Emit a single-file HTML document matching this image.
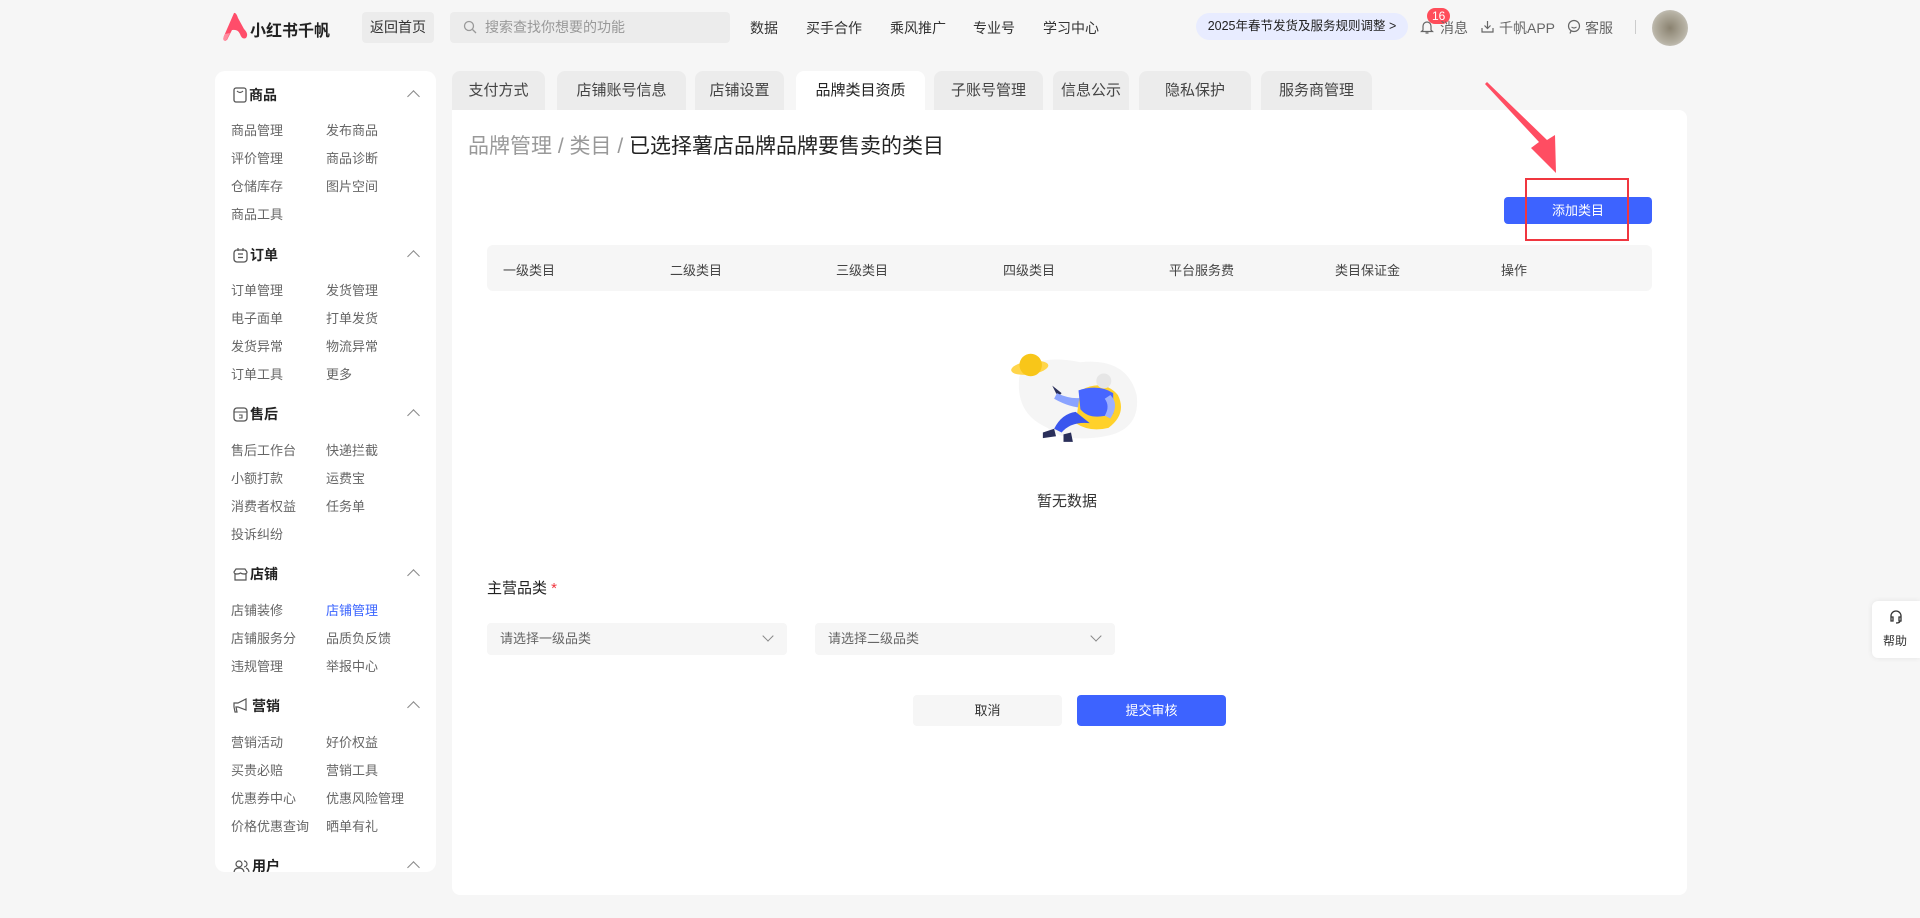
<!DOCTYPE html>
<html><head><meta charset="utf-8"><style>
*{margin:0;padding:0;box-sizing:border-box}
body{width:1920px;height:918px;background:#f6f6f6;font-family:"Liberation Sans","Noto Sans CJK SC",sans-serif;position:relative;overflow:hidden;color:#333}
.a{position:absolute;white-space:nowrap}
.nav{font-size:14px;color:#333;top:18px}
.side{left:215px;top:71px;width:221px;height:801px;background:#fff;border-radius:10px;overflow:hidden}
.sh{position:absolute;left:18px;font-size:14px;color:#222;font-weight:bold}
.sh svg{vertical-align:-3px;margin-right:2px}
.chev{position:absolute;left:194px;width:9px;height:9px;border-left:1.3px solid #888;border-top:1.3px solid #888;transform:rotate(45deg)}
.it{position:absolute;font-size:13px;color:#666}
.tab{top:71px;height:39px;background:#ececec;border-radius:8px 8px 0 0;font-size:15px;color:#444;text-align:center;line-height:40px}
.th{font-size:13px;color:#444;top:260px}
</style></head><body>
<!-- header -->
<svg class="a" style="left:220px;top:12px" width="32" height="30" viewBox="0 0 32 30"><path d="M14 1 L4 24 Q2 29 7 28 L12 18 Q18 17 20 22 Q22 28 26 26 Q29 22 24 17 L18 6 Q16 0 14 1Z" fill="#ff4d6a"/><path d="M5 22 Q1 29 6 29 L10 21Z" fill="#ff8da0"/></svg>
<div class="a" style="left:250px;top:17px;font-size:16px;font-weight:bold;color:#222">小红书千帆</div>
<div class="a" style="left:362px;top:12px;width:72px;height:31px;background:#ececec;border-radius:4px;font-size:14px;line-height:31px;text-align:center">返回首页</div>
<div class="a" style="left:450px;top:12px;width:280px;height:31px;background:#ececec;border-radius:4px;font-size:14px;line-height:31px;color:#999;padding-left:35px">搜索查找你想要的功能</div>
<svg class="a" style="left:463px;top:20px" width="14" height="14" viewBox="0 0 14 14"><circle cx="6" cy="6" r="4.5" fill="none" stroke="#999" stroke-width="1.3"/><path d="M9.5 9.5L13 13" stroke="#999" stroke-width="1.3"/></svg>
<div class="a nav" style="left:750px">数据</div>
<div class="a nav" style="left:806px">买手合作</div>
<div class="a nav" style="left:890px">乘风推广</div>
<div class="a nav" style="left:973px">专业号</div>
<div class="a nav" style="left:1043px">学习中心</div>
<div class="a" style="left:1196px;top:13px;width:212px;height:27px;background:#e8ecff;border-radius:14px;font-size:12.5px;line-height:27px;text-align:center;color:#222">2025年春节发货及服务规则调整 &gt;</div>
<svg class="a" style="left:1420px;top:19px" width="14" height="16" viewBox="0 0 14 16"><path d="M3 11V7a4 4 0 018 0v4l1.5 1.5h-11z M5.5 14h3" fill="none" stroke="#666" stroke-width="1.2"/></svg>
<div class="a" style="left:1427px;top:8px;height:16px;padding:0 5px;background:#ff4d5a;border-radius:8px;color:#fff;font-size:12px;line-height:16px">16</div>
<div class="a nav" style="left:1440px;color:#666">消息</div>
<svg class="a" style="left:1481px;top:20px" width="13" height="13" viewBox="0 0 13 13"><path d="M6.5 1v7M3.5 5.5l3 3 3-3M1 8v4h11V8" fill="none" stroke="#666" stroke-width="1.2"/></svg>
<div class="a nav" style="left:1499px;color:#666">千帆APP</div>
<svg class="a" style="left:1567px;top:19px" width="14" height="15" viewBox="0 0 14 15"><circle cx="7" cy="7" r="5.5" fill="none" stroke="#666" stroke-width="1.2"/><path d="M4.5 8q2.5 2 5 0" fill="none" stroke="#666" stroke-width="1.1"/><path d="M4 12l-1 2.5" stroke="#666" stroke-width="1.2"/></svg>
<div class="a nav" style="left:1585px;color:#666">客服</div>
<div class="a" style="left:1635px;top:20px;width:1px;height:14px;background:#ccc"></div>
<div class="a" style="left:1652px;top:10px;width:36px;height:36px;border-radius:50%;background:radial-gradient(#8a8270,#b5b0a2 60%,#ddd)"></div>

<!-- sidebar -->
<div class="a side">
<div class="sh" style="top:14px"><svg width="14" height="16" viewBox="0 0 14 16"><rect x="1" y="1" width="12" height="14" rx="2" fill="none" stroke="#555" stroke-width="1.3"/><path d="M4 4q3 3 6 0" fill="none" stroke="#555" stroke-width="1.2"/></svg>商品</div><div class="chev" style="top:21px"></div>
<div class="it" style="left:16px;top:49px">商品管理</div><div class="it" style="left:111px;top:49px">发布商品</div>
<div class="it" style="left:16px;top:77px">评价管理</div><div class="it" style="left:111px;top:77px">商品诊断</div>
<div class="it" style="left:16px;top:105px">仓储库存</div><div class="it" style="left:111px;top:105px">图片空间</div>
<div class="it" style="left:16px;top:133px">商品工具</div>
<div class="sh" style="top:174px"><svg width="15" height="15" viewBox="0 0 15 15"><rect x="1" y="2" width="13" height="12" rx="3" fill="none" stroke="#555" stroke-width="1.3"/><path d="M5 6h5M5 9.5h5M5 0v3M10 0v3" stroke="#555" stroke-width="1.2"/></svg>订单</div><div class="chev" style="top:181px"></div>
<div class="it" style="left:16px;top:209px">订单管理</div><div class="it" style="left:111px;top:209px">发货管理</div>
<div class="it" style="left:16px;top:237px">电子面单</div><div class="it" style="left:111px;top:237px">打单发货</div>
<div class="it" style="left:16px;top:265px">发货异常</div><div class="it" style="left:111px;top:265px">物流异常</div>
<div class="it" style="left:16px;top:293px">订单工具</div><div class="it" style="left:111px;top:293px">更多</div>
<div class="sh" style="top:333px"><svg width="15" height="15" viewBox="0 0 15 15"><rect x="1" y="1" width="13" height="13" rx="3" fill="none" stroke="#555" stroke-width="1.3"/><path d="M1 5h13M6 8h3v3H6" fill="none" stroke="#555" stroke-width="1.1"/></svg>售后</div><div class="chev" style="top:340px"></div>
<div class="it" style="left:16px;top:369px">售后工作台</div><div class="it" style="left:111px;top:369px">快递拦截</div>
<div class="it" style="left:16px;top:397px">小额打款</div><div class="it" style="left:111px;top:397px">运费宝</div>
<div class="it" style="left:16px;top:425px">消费者权益</div><div class="it" style="left:111px;top:425px">任务单</div>
<div class="it" style="left:16px;top:453px">投诉纠纷</div>
<div class="sh" style="top:493px"><svg width="15" height="15" viewBox="0 0 15 15"><path d="M1 5l2-3h9l2 3q0 2-3 2-2 0-3.5-1Q6 7 4 7 1 7 1 5zM2 7v6h11V7" fill="none" stroke="#555" stroke-width="1.2"/></svg>店铺</div><div class="chev" style="top:500px"></div>
<div class="it" style="left:16px;top:529px">店铺装修</div><div class="it" style="left:111px;top:529px;color:#3a64ff">店铺管理</div>
<div class="it" style="left:16px;top:557px">店铺服务分</div><div class="it" style="left:111px;top:557px">品质负反馈</div>
<div class="it" style="left:16px;top:585px">违规管理</div><div class="it" style="left:111px;top:585px">举报中心</div>
<div class="sh" style="top:625px"><svg width="17" height="16" viewBox="0 0 17 16"><path d="M1 5h4l8-4v11l-8-3H3l1 5H2L1 9z" fill="none" stroke="#555" stroke-width="1.2"/></svg>营销</div><div class="chev" style="top:632px"></div>
<div class="it" style="left:16px;top:661px">营销活动</div><div class="it" style="left:111px;top:661px">好价权益</div>
<div class="it" style="left:16px;top:689px">买贵必赔</div><div class="it" style="left:111px;top:689px">营销工具</div>
<div class="it" style="left:16px;top:717px">优惠券中心</div><div class="it" style="left:111px;top:717px">优惠风险管理</div>
<div class="it" style="left:16px;top:745px">价格优惠查询</div><div class="it" style="left:111px;top:745px">晒单有礼</div>
<div class="sh" style="top:785px"><svg width="17" height="15" viewBox="0 0 17 15"><circle cx="6" cy="5" r="3" fill="none" stroke="#555" stroke-width="1.2"/><path d="M1 14q0-5 5-5t5 5M11 2a3 3 0 010 6M13 9q3 1 3 5" fill="none" stroke="#555" stroke-width="1.2"/></svg>用户</div><div class="chev" style="top:792px"></div>
</div>

<!-- tabs -->
<div class="a tab" style="left:452px;width:93px">支付方式</div>
<div class="a tab" style="left:557px;width:129px">店铺账号信息</div>
<div class="a tab" style="left:695px;width:89px">店铺设置</div>
<div class="a tab" style="left:796px;width:129px;background:#fff;color:#222">品牌类目资质</div>
<div class="a tab" style="left:934px;width:109px">子账号管理</div>
<div class="a tab" style="left:1053px;width:76px">信息公示</div>
<div class="a tab" style="left:1139px;width:112px">隐私保护</div>
<div class="a tab" style="left:1261px;width:111px">服务商管理</div>

<!-- main -->
<div class="a" style="left:452px;top:110px;width:1235px;height:785px;background:#fff;border-radius:0 8px 8px 8px"></div>
<div class="a" style="left:468px;top:130px;font-size:21px;color:#999">品牌管理 / 类目 / <span style="color:#222">已选择薯店品牌品牌要售卖的类目</span></div>
<div class="a" style="left:1504px;top:197px;width:148px;height:27px;background:#3d63ff;border-radius:4px;color:#fff;font-size:13px;line-height:27px;text-align:center">添加类目</div>
<div class="a" style="left:1525px;top:178px;width:104px;height:63px;border:2.5px solid #f0363f"></div>
<svg class="a" style="left:1470px;top:78px" width="100" height="100" viewBox="0 0 100 100"><path d="M15 6 L69 64 L61 70 L86 95 L85 57 L77 62 L17 4Z" fill="#ff4d62"/></svg>

<div class="a" style="left:487px;top:245px;width:1165px;height:46px;background:#f6f6f6;border-radius:6px"></div>
<div class="a th" style="left:503px">一级类目</div>
<div class="a th" style="left:670px">二级类目</div>
<div class="a th" style="left:836px">三级类目</div>
<div class="a th" style="left:1003px">四级类目</div>
<div class="a th" style="left:1169px">平台服务费</div>
<div class="a th" style="left:1335px">类目保证金</div>
<div class="a th" style="left:1501px">操作</div>

<svg class="a" style="left:996px;top:336px" width="150" height="118" viewBox="0 0 160 120"><path d="M25 40 Q40 15 90 25 Q140 20 150 60 Q155 100 110 105 Q70 110 55 95 Q20 80 25 40Z" fill="#f5f5f5"/><ellipse cx="36" cy="31" rx="20" ry="7" fill="#ffd54a" transform="rotate(-8 36 31)"/><circle cx="37" cy="28" r="12" fill="#f8c619"/><path d="M60 50 l10 8 l-4 4z" fill="#2a2f5a"/><path d="M65 58 Q90 70 110 55 l5 15 Q90 80 62 64Z" fill="#8aa3ff"/><path d="M90 55 Q115 42 130 60 Q140 80 120 95 Q100 100 85 90Z" fill="#ffd12b"/><path d="M88 55 Q110 48 125 58 L125 80 Q100 88 90 75Z" fill="#4766ff"/><circle cx="115" cy="45" r="8" fill="#e6e6e6"/><path d="M85 78 Q70 80 62 96 l8 4 Q80 88 100 90Z" fill="#3a56ee"/><path d="M50 100 l12 -4 l2 8 l-14 2z M72 102 l8 -2 l2 10 l-10 0z" fill="#2a2f5a"/><path d="M122 60 q10 10 0 25 l-6 -3 q6 -10 0 -18z" fill="#9cb0ff"/></svg>
<div class="a" style="left:1037px;top:490px;font-size:15px;color:#333">暂无数据</div>

<div class="a" style="left:487px;top:577px;font-size:15px;color:#222">主营品类 <span style="color:#f0363f">*</span></div>
<div class="a" style="left:487px;top:623px;width:300px;height:32px;background:#f6f6f6;border-radius:4px;font-size:13px;color:#666;line-height:32px;padding-left:13px">请选择一级品类</div>
<div class="a" style="left:815px;top:623px;width:300px;height:32px;background:#f6f6f6;border-radius:4px;font-size:13px;color:#666;line-height:32px;padding-left:13px">请选择二级品类</div>
<div class="a" style="left:764px;top:632px;width:8px;height:8px;border-right:1.2px solid #888;border-bottom:1.2px solid #888;transform:rotate(45deg)"></div>
<div class="a" style="left:1092px;top:632px;width:8px;height:8px;border-right:1.2px solid #888;border-bottom:1.2px solid #888;transform:rotate(45deg)"></div>
<div class="a" style="left:913px;top:695px;width:149px;height:31px;background:#f6f6f6;border-radius:4px;font-size:13px;line-height:31px;text-align:center;color:#333">取消</div>
<div class="a" style="left:1077px;top:695px;width:149px;height:31px;background:#3d63ff;border-radius:4px;font-size:13px;line-height:31px;text-align:center;color:#fff">提交审核</div>

<div class="a" style="left:1872px;top:601px;width:48px;height:57px;background:#fff;border-radius:6px 0 0 6px;box-shadow:0 0 6px rgba(0,0,0,.08)"></div>
<svg class="a" style="left:1888px;top:609px" width="16" height="16" viewBox="0 0 16 16"><path d="M3 9V7a5 5 0 0110 0v2M3 8h2v4H3zM11 8h2v4h-2zM12 12q0 2-4 2" fill="none" stroke="#333" stroke-width="1.3"/></svg>
<div class="a" style="left:1883px;top:632px;font-size:12px;color:#333">帮助</div>
</body></html>
